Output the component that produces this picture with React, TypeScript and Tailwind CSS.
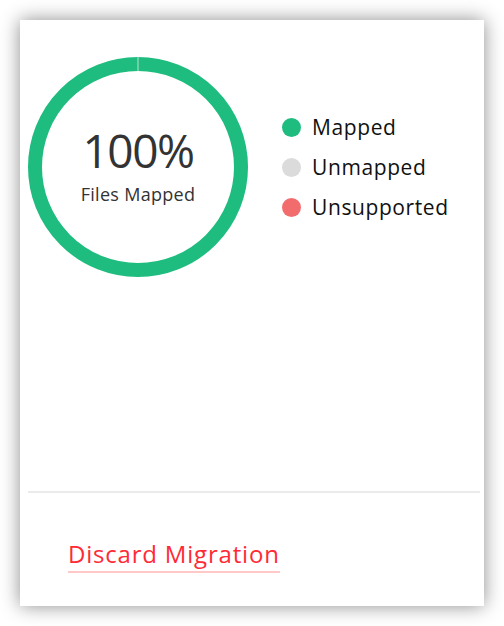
const legend = [
  { label: 'Mapped', color: 'bg-[#1ebd7f]' },
  { label: 'Unmapped', color: 'bg-[#dcdbdb]' },
  { label: 'Unsupported', color: 'bg-[#f26c6e]' },
];

const Ring = () => (
  <div className="relative w-[220px] h-[220px] shrink-0">
    <svg width="220" height="220" viewBox="0 0 220 220" className="absolute inset-0">
      <circle cx="110" cy="110" r="103" fill="none" stroke="#1ebd7f" strokeWidth="14" />
      <line x1="110" y1="0" x2="110" y2="14" stroke="#b9e3cf" strokeWidth="1" />
    </svg>
    <div className="absolute inset-0 flex flex-col items-center justify-center text-[#333]">
      <span className="text-[46px] leading-none tracking-[-1.5px] mt-[-4px]">100%</span>
      <span className="text-[18px] leading-none tracking-[0.3px] mt-[12px]">Files Mapped</span>
    </div>
  </div>
);

export default function App() {
  return (
    <div className="w-[504px] h-[626px] bg-white p-5" style={{ fontFamily: '"Open Sans", Lato, sans-serif' }}>
      <div className="w-[464px] h-[586px] bg-white shadow-[0_0_18px_rgba(0,0,0,0.45)] flex flex-col">
        <div className="h-[471px] flex pl-2 pt-[37px]">
          <Ring />
          <div className="ml-[34px] pt-[59px] flex flex-col gap-[18px]">
            {legend.map((item) => (
              <div key={item.label} className="flex items-center gap-[11px] h-[22px]">
                <span className={`w-[19px] h-[19px] rounded-full ${item.color}`} />
                <span className="text-[21px] leading-none tracking-[0.6px] text-[#111]">{item.label}</span>
              </div>
            ))}
          </div>
        </div>
        <div className="h-[2px] bg-[#ebebeb] ml-2 mr-1" />
        <div className="pl-12 pt-[47px]">
          <a href="#" className="inline-block text-[24px] leading-[28px] tracking-[0.8px] text-[#ff2a36] border-b-2 border-[#ffc9c9] pb-[3px]">
            Discard Migration
          </a>
        </div>
      </div>
    </div>
  );
}
